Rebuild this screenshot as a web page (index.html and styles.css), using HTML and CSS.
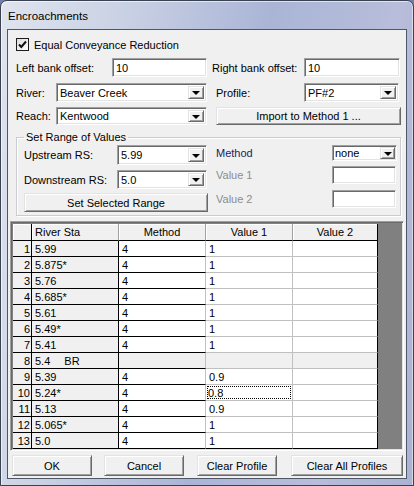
FILE: index.html
```html
<!DOCTYPE html>
<html>
<head>
<meta charset="utf-8">
<link rel="stylesheet" href="styles.css">
</head>
<body>
<div class="window">
  <div class="titlebar"><span class="title">Encroachments</span></div>
  <div class="client">
    <div class="row check-row">
      <span class="checkbox"><svg width="11" height="11" viewBox="0 0 11 11"><path d="M2 5.5 L4.3 8 L9 2.5" fill="none" stroke="#111" stroke-width="2"/></svg></span>
      <span class="check-text">Equal Conveyance Reduction</span>
    </div>
    <div class="row offsets-row">
      <span class="lbl w-loff">Left bank offset:</span>
      <span class="edit w-ledit">10</span>
      <span class="lbl w-roff">Right bank offset:</span>
      <span class="edit w-redit">10</span>
    </div>
    <div class="row river-row">
      <span class="lbl w-short">River:</span>
      <span class="combo w-combo"><span class="ctext">Beaver Creek</span><span class="arrow"></span></span>
      <span class="lbl w-prof">Profile:</span>
      <span class="combo w-pcombo"><span class="ctext">PF#2</span><span class="arrow"></span></span>
    </div>
    <div class="row reach-row">
      <span class="lbl w-short">Reach:</span>
      <span class="combo w-combo"><span class="ctext">Kentwood</span><span class="arrow"></span></span>
      <span class="btn w-import">Import to Method 1 ...</span>
    </div>
    <fieldset class="group">
      <legend>Set Range of Values</legend>
      <div class="group-grid">
        <div class="gcol left-col">
          <div class="grow g-up">
            <span class="lbl w-rs">Upstream RS:</span>
            <span class="combo w-rscombo h20"><span class="ctext">5.99</span><span class="arrow"></span></span>
          </div>
          <div class="grow g-down">
            <span class="lbl w-rs">Downstream RS:</span>
            <span class="combo w-rscombo h19"><span class="ctext">5.0</span><span class="arrow"></span></span>
          </div>
          <span class="btn w-set">Set Selected Range</span>
        </div>
        <div class="gcol right-col">
          <div class="grow g-method">
            <span class="lbl method-lbl">Method</span>
            <span class="combo w-mcombo"><span class="ctext">none</span><span class="arrow"></span></span>
          </div>
          <div class="grow g-v1">
            <span class="lbl disabled">Value 1</span>
            <span class="edit w-vedit"></span>
          </div>
          <div class="grow g-v2">
            <span class="lbl disabled">Value 2</span>
            <span class="edit w-vedit"></span>
          </div>
        </div>
      </div>
    </fieldset>
    <div class="gridbox">
      <div class="grid">
        <div class="hc rn"></div><div class="hc left">River Sta</div><div class="hc">Method</div><div class="hc">Value 1</div><div class="hc last">Value 2</div>

        <div class="c rn">1</div><div class="c rs">5.99</div><div class="c m">4</div><div class="c v">1</div><div class="c v last"></div>
        <div class="c rn">2</div><div class="c rs">5.875*</div><div class="c m">4</div><div class="c v">1</div><div class="c v last"></div>
        <div class="c rn">3</div><div class="c rs">5.76</div><div class="c m">4</div><div class="c v">1</div><div class="c v last"></div>
        <div class="c rn">4</div><div class="c rs">5.685*</div><div class="c m">4</div><div class="c v">1</div><div class="c v last"></div>
        <div class="c rn">5</div><div class="c rs">5.61</div><div class="c m">4</div><div class="c v">1</div><div class="c v last"></div>
        <div class="c rn">6</div><div class="c rs">5.49*</div><div class="c m">4</div><div class="c v">1</div><div class="c v last"></div>
        <div class="c rn">7</div><div class="c rs">5.41</div><div class="c m">4</div><div class="c v">1</div><div class="c v last"></div>
        <div class="c rn">8</div><div class="c rs">5.4<span class="br">BR</span></div><div class="c m gray"></div><div class="c v gray"></div><div class="c v gray last"></div>
        <div class="c rn">9</div><div class="c rs">5.39</div><div class="c m">4</div><div class="c v">0.9</div><div class="c v last"></div>
        <div class="c rn">10</div><div class="c rs">5.24*</div><div class="c m">4</div><div class="c v focus"><span class="focus-rect">0.8</span></div><div class="c v last"></div>
        <div class="c rn">11</div><div class="c rs">5.13</div><div class="c m">4</div><div class="c v">0.9</div><div class="c v last"></div>
        <div class="c rn">12</div><div class="c rs">5.065*</div><div class="c m">4</div><div class="c v">1</div><div class="c v last"></div>
        <div class="c rn bot">13</div><div class="c rs bot">5.0</div><div class="c m bot">4</div><div class="c v bot">1</div><div class="c v last bot"></div>
      </div>
    </div>
    <div class="buttons">
      <span class="btn b-ok">OK</span>
      <span class="btn b-cancel">Cancel</span>
      <span class="btn b-clear">Clear Profile</span>
      <span class="btn b-clearall">Clear All Profiles</span>
    </div>
  </div>
</div>
</body>
</html>
```

FILE: styles.css
```css
* { box-sizing: border-box; }
html, body { margin: 0; padding: 0; }
body {
  width: 414px;
  height: 486px;
  overflow: hidden;
  font-family: "Liberation Sans", Arial, sans-serif;
  font-size: 11px;
  color: #000;
  background: #6f7fa8;
}
.window {
  width: 414px;
  height: 486px;
  border: 1px solid #3a4150;
  border-radius: 7px 7px 0 0;
  background: linear-gradient(100deg, #dfe4ee 0%, #c9d1e4 25%, #aab5d6 55%, #b7bdda 80%, #a9b3d2 100%);
  padding: 0 6px 6px 6px;
  display: flex;
  flex-direction: column;
  box-shadow: inset 1px 1px 0 rgba(255,255,255,0.6), inset -1px 0 0 rgba(255,255,255,0.5);
}
.titlebar {
  height: 28px;
  display: flex;
  align-items: center;
  padding-left: 1px;
  flex: none;
}
.title {
  font-size: 11.5px;
  color: #000;
  margin-top: 1px;
}
.client {
  flex: 1;
  border: 1px solid #4e5668;
  background: #f0f0f0;
  display: flex;
  flex-direction: column;
}
.row {
  display: flex;
  align-items: center;
  flex: none;
}
.lbl { white-space: nowrap; flex: none; }
.check-row { margin-top: 8px; padding-left: 8px; height: 13px; }
.checkbox {
  width: 13px; height: 13px;
  border: 1px solid #1c1c1c;
  background: linear-gradient(135deg, #dcdcdc, #ffffff);
  display: flex; align-items: center; justify-content: center;
  flex: none;
}
.checkbox svg { display: block; }
.check-text { margin-left: 5px; }

.offsets-row { margin-top: 7px; height: 19px; padding-left: 8px; }
.w-loff { width: 96px; }
.w-ledit { width: 95px; }
.w-roff { width: 92px; margin-left: 5px; }
.w-redit { width: 96px; }

.edit {
  height: 19px;
  background: #fff;
  border-top: 1px solid #a0a0a0;
  border-left: 1px solid #a0a0a0;
  border-right: 1px solid #fff;
  border-bottom: 1px solid #fff;
  box-shadow: inset 1px 1px 0 #696969, inset -1px -1px 0 #e3e3e3;
  padding-left: 3px;
  display: flex;
  align-items: center;
  flex: none;
}
.combo {
  height: 19px;
  background: #fff;
  border-top: 1px solid #a0a0a0;
  border-left: 1px solid #a0a0a0;
  border-right: 1px solid #fff;
  border-bottom: 1px solid #fff;
  box-shadow: inset 1px 1px 0 #696969, inset -1px -1px 0 #e3e3e3;
  display: flex;
  align-items: center;
  padding: 2px 2px 2px 2px;
  flex: none;
}
.ctext { flex: 1; padding-left: 1px; white-space: nowrap; }
.arrow {
  width: 16px;
  align-self: stretch;
  background: #f0f0f0;
  border-top: 1px solid #e3e3e3;
  border-left: 1px solid #e3e3e3;
  border-right: 1px solid #696969;
  border-bottom: 1px solid #696969;
  box-shadow: inset 1px 1px 0 #fff, inset -1px -1px 0 #a0a0a0;
  display: flex; align-items: center; justify-content: center;
  flex: none;
}
.arrow::after {
  content: "";
  width: 0; height: 0;
  border-left: 4px solid transparent;
  border-right: 4px solid transparent;
  border-top: 4px solid #000;
  margin-top: 1px;
}

.river-row { margin-top: 6px; height: 19px; padding-left: 8px; }
.w-short { width: 40px; }
.w-combo { width: 151px; }
.w-prof { width: 88px; margin-left: 9px; }
.w-pcombo { width: 95px; }

.reach-row { margin-top: 4px; height: 19px; padding-left: 8px; }
.reach-row .w-combo { height: 18px; margin-top: 1px; }

.btn {
  background: #f0f0f0;
  border-top: 1px solid #e3e3e3;
  border-left: 1px solid #e3e3e3;
  border-right: 1px solid #696969;
  border-bottom: 1px solid #696969;
  box-shadow: inset 1px 1px 0 #fff, inset -1px -1px 0 #a0a0a0;
  display: flex;
  align-items: center;
  justify-content: center;
  white-space: nowrap;
  flex: none;
}
.w-import { width: 185px; height: 18px; margin-left: 9px; }

.group {
  margin: 6px 0 0 8px;
  width: 385px;
  height: 85px;
  border: 1px solid #c9cdd2;
  box-shadow: 1px 1px 0 #fff, inset 1px 1px 0 #fff;
  padding: 0 0 0 7px;
  flex: none;
}
.group legend {
  padding: 0 2px;
  margin-left: 0;
  line-height: 13px;
}
.group-grid {
  display: flex;
  margin-top: 1px;
}
.gcol { display: flex; flex-direction: column; }
.left-col { width: 184px; }
.right-col { margin-left: 8px; }
.grow { display: flex; align-items: center; }
.w-rs { width: 93px; }
.w-rscombo { width: 90px; }
.h20 { height: 20px; }
.h19 { height: 19px; }
.g-down { margin-top: 5px; }
.w-set { width: 184px; height: 19px; margin-top: 4px; }

.method-lbl { width: 116px; color: #1c1c5a; }
.w-mcombo { width: 65px; height: 16px; padding: 1px; }
.w-mcombo .arrow { width: 15px; }
.g-method { height: 16px; }
.g-v1 { margin-top: 5px; }
.g-v2 { margin-top: 6px; }
.disabled { width: 116px; color: #8d8d8d; }
.w-vedit { width: 64px; height: 18px; }

.gridbox {
  margin: 5px 2px 0 2px;
  height: 230px;
  border-top: 1px solid #a0a0a0;
  border-left: 1px solid #a0a0a0;
  border-right: 1px solid #fff;
  border-bottom: 1px solid #fff;
  box-shadow: inset 1px 1px 0 #696969, inset -1px -1px 0 #e3e3e3;
  background: #808080;
  padding: 2px 2px 2px 2px;
  flex: none;
}
.grid {
  display: grid;
  grid-template-columns: 19px 87px 87px 87px 85px;
  grid-template-rows: 17px;
  grid-auto-rows: 16px;
  width: 365px;
}
.hc {
  background: #f0f0f0;
  border-right: 1px solid #a0a0a0;
  border-bottom: 1px solid #000;
  box-shadow: inset 1px 1px 0 #fff;
  display: flex;
  align-items: center;
  justify-content: center;
  white-space: nowrap;
}
.hc.left { justify-content: flex-start; padding-left: 3px; }
.hc.rn { border-right: 1px solid #000; }
.hc.last { border-right: 1px solid #000; }
.c {
  display: flex;
  align-items: center;
  white-space: nowrap;
  padding-left: 3px;
  border-right: 1px solid #c0c0c0;
  border-bottom: 1px solid #c0c0c0;
  background: #fff;
}
.c.rn {
  background: #f0f0f0;
  justify-content: flex-end;
  padding: 0 1px 0 0;
  border-right: 1px solid #000;
  border-bottom: 1px solid #000;
}
.c.rs {
  background: #f0f0f0;
  border-right: 1px solid #000;
  border-bottom: 1px solid #000;
}
.c.m { border-bottom: 1px solid #000; }
.c.gray { background: #f0f0f0; }
.c.last { border-right: 1px solid #000; }
.c.bot { border-bottom: 1px solid #000; }
.br { margin-left: 14px; }
.c.focus { padding: 1px 1px 1px 1px; }
.focus-rect {
  flex: 1;
  align-self: stretch;
  display: flex;
  align-items: center;
  padding-left: 1px;
  outline: 1px dotted #000;
  outline-offset: -1px;
}

.buttons {
  display: flex;
  margin-top: 4px;
  padding-left: 4px;
  height: 21px;
  flex: none;
}
.buttons .btn { height: 21px; }
.b-ok { width: 80px; }
.b-cancel { width: 80px; margin-left: 12px; }
.b-clear { width: 80px; margin-left: 13px; }
.b-clearall { width: 112px; margin-left: 14px; }
```
